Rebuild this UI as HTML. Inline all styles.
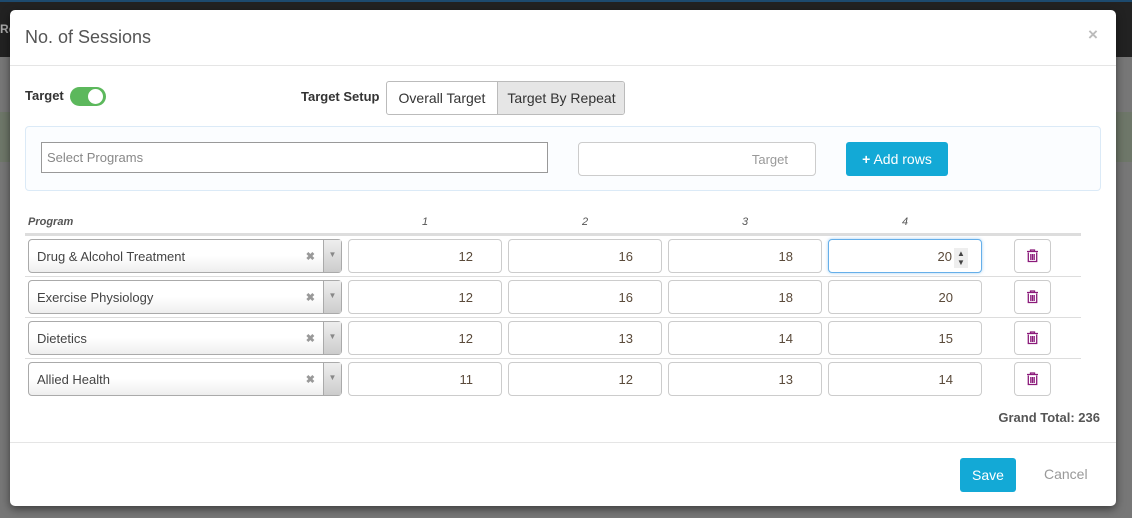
<!DOCTYPE html>
<html><head><style>
*{box-sizing:border-box;margin:0;padding:0}
body{width:1132px;height:518px;overflow:hidden;position:relative;font-family:"Liberation Sans",sans-serif;background:#777;}
.a{position:absolute}
.modal{left:10px;top:10px;width:1106px;height:496px;background:#fff;border-radius:5px;box-shadow:0 3px 9px rgba(0,0,0,.5)}
.inp{position:absolute;height:34px;border:1px solid #ccc;border-radius:4px;background:#fff;font-size:13px;color:#5a4a3a;text-align:right;padding-right:28px;line-height:33px}
.sel{position:absolute;left:28px;width:314px;height:34px;border:1px solid #aaa;border-radius:4px;background:linear-gradient(#fff 50%,#eee);font-size:13px;color:#444;line-height:34px;padding-left:8px}
.sel .x{position:absolute;right:26px;top:0;color:#999;font-size:11px;font-weight:bold}
.sel .d{position:absolute;right:0;top:0;width:18px;height:32px;border-left:1px solid #aaa;background:linear-gradient(#eee,#ccc);color:#888;font-size:8px;text-align:center;line-height:30px}
.tr{position:absolute;left:1014px;width:37px;height:34px;border:1px solid #ccc;border-radius:4px;background:#fff}
.sep{position:absolute;left:25px;width:1056px;height:1px;background:#ddd}
.hd{position:absolute;top:216px;font-size:11px;font-style:italic;color:#555}
</style></head><body>
<div class="a" style="left:0;top:0;width:1132px;height:2px;background:#1d4a6e"></div>
<div class="a" style="left:0;top:2px;width:1132px;height:55px;background:#222"></div>
<div class="a" style="left:0;top:112px;width:1132px;height:50px;background:#6e7769"></div>
<div class="a" style="left:0;top:22px;color:#aaa;font-size:12px;font-weight:bold">Re</div>
<div class="a modal"></div>
<div class="a" style="left:25px;top:27px;font-size:18px;color:#555">No. of Sessions</div>
<div class="a" style="left:1088px;top:25px;font-size:17px;color:#bbb;font-weight:bold">×</div>
<div class="a" style="left:10px;top:65px;width:1106px;height:1px;background:#e5e5e5"></div>
<div class="a" style="left:25px;top:88px;font-size:13px;font-weight:bold;color:#333">Target</div>
<div class="a" style="left:70px;top:87px;width:36px;height:19px;border-radius:10px;background:#5cb85c"><div class="a" style="right:3px;top:2px;width:15px;height:15px;border-radius:50%;background:#fff"></div></div>
<div class="a" style="left:301px;top:89px;font-size:13px;font-weight:bold;color:#333">Target Setup</div>
<div class="a" style="left:386px;top:81px;width:239px;height:34px;border:1px solid #bbb;border-radius:3px;overflow:hidden;font-size:14px;color:#333">
<div class="a" style="left:0;top:0;width:110px;height:32px;line-height:32px;text-align:center">Overall Target</div>
<div class="a" style="left:110px;top:0;width:128px;height:32px;line-height:32px;text-align:center;background:#e6e6e6;border-left:1px solid #bbb">Target By Repeat</div></div>
<div class="a" style="left:25px;top:126px;width:1076px;height:65px;border:1px solid #dbeaf7;border-radius:4px;background:#fbfdff"></div>
<div class="a" style="left:41px;top:142px;width:507px;height:31px;border:1px solid #999;background:#fff;font-size:13px;color:#888;line-height:29px;padding-left:5px">Select Programs</div>
<div class="a" style="left:578px;top:142px;width:238px;height:34px;border:1px solid #ccc;border-radius:4px;background:#fff;font-size:13px;color:#999;line-height:34px;text-align:right;padding-right:27px">Target</div>
<div class="a" style="left:846px;top:142px;width:102px;height:34px;border-radius:3px;background:#13a9d6;color:#fff;font-size:14px;line-height:34px;text-align:center"><b>+</b> Add rows</div>
<div class="hd" style="left:28px;font-weight:bold">Program</div>
<div class="hd" style="left:422px">1</div><div class="hd" style="left:582px">2</div><div class="hd" style="left:742px">3</div><div class="hd" style="left:902px">4</div>
<div class="a" style="left:25px;top:233px;width:1056px;height:3px;background:#ddd"></div>
<div class="sep" style="top:276px"></div><div class="sep" style="top:317px"></div><div class="sep" style="top:358px"></div>

<div class="sel" style="top:239px">Drug &amp; Alcohol Treatment<span class="x">✖</span><span class="d">▼</span></div>
<div class="inp" style="left:348px;top:239px;width:154px">12</div><div class="inp" style="left:508px;top:239px;width:154px">16</div><div class="inp" style="left:668px;top:239px;width:154px">18</div>
<div class="inp" style="left:828px;top:239px;width:154px;border-color:#66afe9;box-shadow:0 0 3px rgba(102,175,233,.6);padding-right:13px">20<span style="display:inline-block;width:14px;height:20px;background:#eee;vertical-align:middle;margin-left:2px;font-size:8px;line-height:9px;text-align:center;color:#444;padding-top:1px">▲<br>▼</span></div>

<div class="sel" style="top:280px">Exercise Physiology<span class="x">✖</span><span class="d">▼</span></div>
<div class="inp" style="left:348px;top:280px;width:154px">12</div><div class="inp" style="left:508px;top:280px;width:154px">16</div><div class="inp" style="left:668px;top:280px;width:154px">18</div><div class="inp" style="left:828px;top:280px;width:154px">20</div>

<div class="sel" style="top:321px">Dietetics<span class="x">✖</span><span class="d">▼</span></div>
<div class="inp" style="left:348px;top:321px;width:154px">12</div><div class="inp" style="left:508px;top:321px;width:154px">13</div><div class="inp" style="left:668px;top:321px;width:154px">14</div><div class="inp" style="left:828px;top:321px;width:154px">15</div>

<div class="sel" style="top:362px">Allied Health<span class="x">✖</span><span class="d">▼</span></div>
<div class="inp" style="left:348px;top:362px;width:154px">11</div><div class="inp" style="left:508px;top:362px;width:154px">12</div><div class="inp" style="left:668px;top:362px;width:154px">13</div><div class="inp" style="left:828px;top:362px;width:154px">14</div>

<div class="tr" style="top:239px"></div><div class="tr" style="top:280px"></div><div class="tr" style="top:321px"></div><div class="tr" style="top:362px"></div>
<svg class="a" style="left:0;top:0" width="1132" height="518">
<g fill="none" stroke="#8b1a7a" stroke-width="1.3">
<g transform="translate(1027,250)"><path d="M0 1.5h11M3.5 1.5V0h4v1.5M1.3 2.5v9h8.4v-9M3.8 4v6M5.5 4v6M7.2 4v6"/></g>
<g transform="translate(1027,291)"><path d="M0 1.5h11M3.5 1.5V0h4v1.5M1.3 2.5v9h8.4v-9M3.8 4v6M5.5 4v6M7.2 4v6"/></g>
<g transform="translate(1027,332)"><path d="M0 1.5h11M3.5 1.5V0h4v1.5M1.3 2.5v9h8.4v-9M3.8 4v6M5.5 4v6M7.2 4v6"/></g>
<g transform="translate(1027,373)"><path d="M0 1.5h11M3.5 1.5V0h4v1.5M1.3 2.5v9h8.4v-9M3.8 4v6M5.5 4v6M7.2 4v6"/></g>
</g></svg>
<div class="a" style="left:990px;top:410px;width:110px;text-align:right;font-size:13px;font-weight:bold;color:#555">Grand Total: 236</div>
<div class="a" style="left:10px;top:442px;width:1106px;height:1px;background:#e5e5e5"></div>
<div class="a" style="left:960px;top:458px;width:56px;height:34px;border-radius:3px;background:#13a9d6;color:#fff;font-size:14px;line-height:34px;text-align:center">Save</div>
<div class="a" style="left:1044px;top:466px;font-size:14px;color:#999">Cancel</div>
</body></html>
